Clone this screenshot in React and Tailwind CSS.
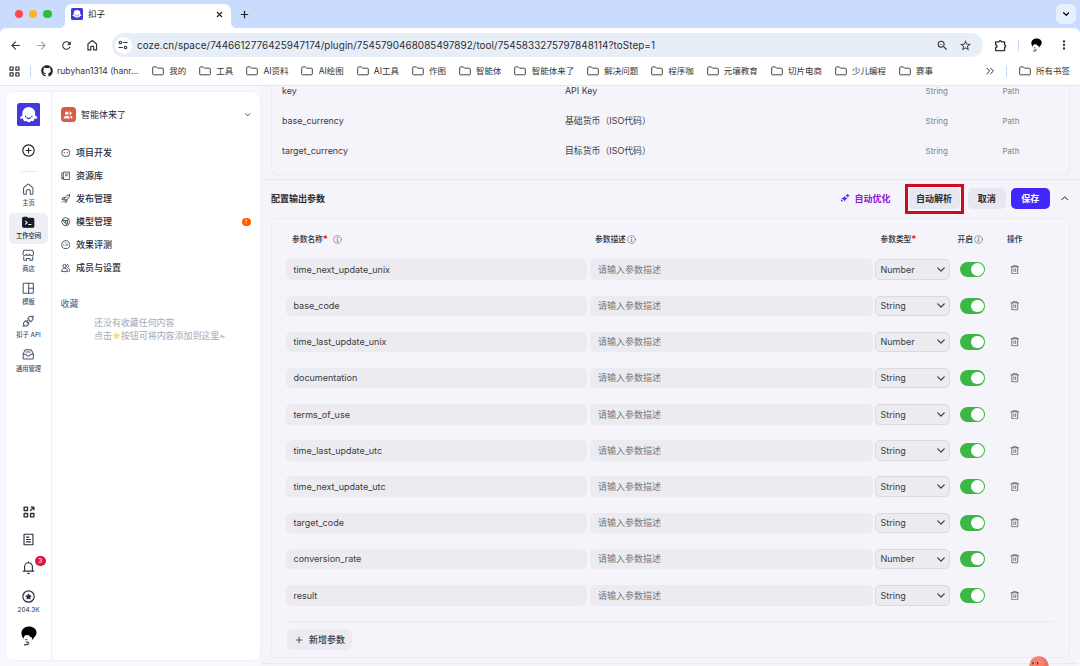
import { Plus, X } from "lucide-react";
import { FaGithub } from "react-icons/fa";
import { MdArrowBack, MdArrowForward, MdMoreVert, MdRefresh, MdStarBorder, MdZoomOut } from "react-icons/md";

const bookmarks = [
  "我的",
  "工具",
  "AI资料",
  "AI绘图",
  "AI工具",
  "作图",
  "智能体",
  "智能体来了",
  "解决问题",
  "程序咖",
  "元壤教育",
  "切片电商",
  "少儿编程",
  "赛事",
];

const inputParams = [
  { name: "key", desc: "API Key" },
  { name: "base_currency", desc: "基础货币（ISO代码）" },
  { name: "target_currency", desc: "目标货币（ISO代码）" },
];

const outputParams = [
  { name: "time_next_update_unix", type: "Number" },
  { name: "base_code", type: "String" },
  { name: "time_last_update_unix", type: "Number" },
  { name: "documentation", type: "String" },
  { name: "terms_of_use", type: "String" },
  { name: "time_last_update_utc", type: "String" },
  { name: "time_next_update_utc", type: "String" },
  { name: "target_code", type: "String" },
  { name: "conversion_rate", type: "Number" },
  { name: "result", type: "String" },
];

const Icon = ({ className = "size-3", width = 1.3, children }) => (
  <svg
    viewBox="0 0 16 16"
    fill="none"
    stroke="currentColor"
    strokeWidth={width}
    strokeLinecap="round"
    strokeLinejoin="round"
    className={`${className} shrink-0`}
  >
    {children}
  </svg>
);

const FolderIcon = () => (
  <svg viewBox="0 0 12 10" fill="none" stroke="#474747" strokeWidth="1" className="h-[10px] w-[12px] shrink-0">
    <path d="M.7 8V1.700c0-.5.3-.8.8-.8h2.800l1.300 1.300h4.900c.5 0 .8.3.8.8v5c0 .5-.3.8-.8.8h-9C1 8.800.7 8.500.7 8Z" />
  </svg>
);

const Chevron = ({ className, up, width = 1.4 }) => (
  <svg
    viewBox="0 0 10 6"
    fill="none"
    stroke="currentColor"
    strokeWidth={width}
    strokeLinecap="round"
    strokeLinejoin="round"
    className={`${className} shrink-0`}
  >
    <path d={up ? "M1 5l4-4 4 4" : "M1 1l4 4 4-4"} />
  </svg>
);

const InfoIcon = ({ className = "" }) => (
  <Icon className={`size-[9px] text-[#6b6d75] ${className}`} width={1.1}>
    <circle cx="8" cy="8" r="7" />
    <path d="M7 7.200h1.200V11M6.800 11.200h2.600" />
    <circle cx="8" cy="4.800" r=".5" fill="currentColor" />
  </Icon>
);

const TrashIcon = () => (
  <Icon className="size-[9.500px] text-[#55565c]" width={1.3}>
    <path d="M1.500 3h13M5 2.800V1.200h6v1.600M3 3.200v11.500h10V3.200M6.500 6.500v4.500M9.500 6.500v4.500" />
  </Icon>
);

const Ghost = ({ className }) => (
  <svg viewBox="0 0 24 24" className={`${className} shrink-0`}>
    <rect width="24" height="24" rx="3" fill="#4238df" />
    <path
      d="M12 4a6.500 6.500 0 0 0-6.500 6.500v2.200c-1.200.4-2.200 1.400-2.300 2.600 0 .8.7 1 1.500.7l1.200-.3c.3 1.200.7 2 1.400 2.600.8.600 1.600.2 2.200-.2.700 1 1.500 1.500 2.500 1.500s1.800-.5 2.500-1.500c.6.400 1.400.8 2.200.2.700-.6 1.100-1.400 1.400-2.600l1.200.3c.8.3 1.500.1 1.500-.7-.1-1.200-1.100-2.200-2.300-2.600v-2.200A6.500 6.500 0 0 0 12 4Z"
      fill="#fff"
    />
    <path
      d="M8.800 13.300v.8M15.200 13.300v.8M10.200 15c1 1.300 2.600 1.300 3.600 0"
      stroke="#4238df"
      strokeWidth="1.200"
      fill="none"
      strokeLinecap="round"
    />
  </svg>
);

const Avatar = ({ className }) => (
  <svg viewBox="0 0 16 20" className={`${className} shrink-0`}>
    <path d="M2 8.500 3 14l2 2.500-2 2.300 5-.3.500-2.500 3-3 1-3Z" fill="#fff" stroke="#aaa" strokeWidth=".4" />
    <path
      d="M.6 8.400C-.2 4.500 3 .7 7.500.6c4.500-.2 7.900 2.300 8 5.700.1 2.500-1.200 4.200-2.900 5.600l-.8 2-1.400-3-1 .3-1.200-2-3.500-.2-1.600 1.400-.5 2.200C1.600 11.500.8 10 .6 8.400Z"
      fill="#000"
    />
    <path d="m4.500 13.500 1.800.3M5 16l2 .2M3 18.900l3.800-.2.800-2.500" fill="none" stroke="#000" strokeWidth=".9" />
  </svg>
);

const navItems = [
  {
    label: "项目开发",
    icon: (
      <>
        <rect x="1.500" y="2.500" width="13" height="11.500" rx="4.500" />
        <path d="M5.500 7.500v1M10.500 7.500v1" />
      </>
    ),
  },
  {
    label: "资源库",
    icon: <path d="M1.500 3v10.500M4.500 1.800h10v12.400h-10zM7.500 5h4.500M7.500 8h3M4.500 11.500h-2" />,
  },
  {
    label: "发布管理",
    icon: (
      <path d="M14.500 1.500c-4 0-7 2.500-8.800 6.500l2.500 2.500c4-1.800 6.300-5 6.300-9ZM6.500 6H3.200L1.500 9l4 .2M10 9.500v3.300L7 14.500l-.2-4M2 14l3-3M10.300 5.700l.2-.2" />
    ),
  },
  {
    label: "模型管理",
    alert: true,
    icon: (
      <>
        <path d="M8 1.200 12.500 3 14.800 8 12.500 13 8 14.800 3.500 13 1.200 8 3.500 3Z" />
        <path d="M2.500 5.500 11 6v4.500L8.500 14M11 6l2-2.500M3 5.500l4 4.500 4 .5M7 10l1.500-4" />
      </>
    ),
  },
  {
    label: "效果评测",
    icon: (
      <>
        <path d="M4 13.800A7 7 0 1 1 12 13.800Z" />
        <path d="m8 9.500 2.500-3M4.500 8h.3M8 4.500v.2M11.500 8.500h.3" />
      </>
    ),
  },
  {
    label: "成员与设置",
    icon: (
      <>
        <circle cx="6" cy="5" r="2.800" />
        <path d="M1 13.800c0-3 2-4.800 5-4.800s5 1.800 5 4.800ZM10.500 2.500c3 0 3.500 4 .8 5M12.500 9c1.700.8 2.500 2.400 2.500 4.800h-1.500" />
      </>
    ),
  },
];

const railItems = [
  {
    label: "主页",
    icon: <path d="M2 6.800c0-.5.2-.8.6-1.100L7 1.800c.6-.5 1.400-.5 2 0l4.400 3.900c.4.300.6.600.6 1.100v6.700c0 .6-.3.900-.9.900h-2.500V11a2.600 2.600 0 0 0-5.200 0v3.400H2.900c-.6 0-.9-.3-.9-.9Z" />,
  },
  {
    label: "工作空间",
    active: true,
    icon: (
      <>
        <path
          d="M.8 3.200C.8 2 1.300 1.500 2.500 1.500H6L7.500 3h6c1 0 1.700.6 1.700 1.700v8c0 1-.7 1.700-1.700 1.700h-11c-1 0-1.700-.7-1.700-1.700Z"
          fill="currentColor"
        />
        <path d="m4.500 6.500 2.200 2-2.200 2M8.500 11h3" stroke="#fff" />
      </>
    ),
  },
  {
    label: "商店",
    icon: (
      <path d="M3.300 1.500h9.400c.8 0 1.300.5 1.400 1.300l.7 3.500c0 2.600-4.500 2.600-4.700 0-.3 2.600-3.900 2.600-4.200 0-.2 2.600-4.700 2.600-4.700 0l.7-3.500c.1-.8.600-1.300 1.400-1.300ZM2.200 10v3.700c0 .5.3.8.8.8h2.700v-2.300h4.600v2.300H13c.5 0 .8-.3.8-.8V10" />
    ),
  },
  {
    label: "模板",
    icon: (
      <>
        <rect x="1.500" y="1.500" width="13" height="13" rx="1" />
        <path d="M8.500 1.500v13M8.500 8h6" />
      </>
    ),
  },
  {
    label: "扣子 API",
    icon: (
      <>
        <path d="m7.300 4.500 1.800-1.800c1.300-1.300 3-1.200 4.100-.1s1.200 2.900 0 4.100l-1.800 1.900ZM4.600 7.300 2.800 9.200c-1.300 1.300-1.200 3-.1 4.100s2.900 1.200 4.100 0l1.900-1.800Z" />
        <path d="m13.200 2.700 1.600-1.500M2.800 13.200l-1.500 1.600M5.800 8.500l1.900-1.800M7.500 10.200l1.800-1.900" />
      </>
    ),
  },
  {
    label: "通用管理",
    icon: (
      <path d="M1.500 7.500 3.600 3.200c.3-.6.7-.9 1.400-.9h6c.7 0 1.100.3 1.400.9l2.100 4.300v5.700c0 .6-.4 1-1 1h-11c-.6 0-1-.4-1-1ZM1.500 8h3.800c.3 3.300 5.100 3.300 5.400 0h3.800M5.500 5h5" />
    ),
  },
];

const BrowserBar = () => (
  <div className="h-[86px] shrink-0 border-b border-[#e6e6e8] bg-[#c9dcfd]">
    <div className="flex h-[28px] items-end">
      <div className="flex h-full w-[65px] items-center gap-[5.500px] pl-[14.500px]">
        <span className="size-[8.700px] rounded-full bg-[#ff4b48]" />
        <span className="size-[8.700px] rounded-full bg-[#fdb02b]" />
        <span className="size-[8.700px] rounded-full bg-[#28c135]" />
      </div>
      <div className="relative flex h-[24px] w-[166px] items-center rounded-t-[7px] bg-white pb-[4px] pl-[6px]">
        <span className="absolute bottom-0 -left-[6px] size-[6px] bg-[radial-gradient(circle_at_0_0,transparent_6px,white_6.5px)]" />
        <span className="absolute -right-[6px] bottom-0 size-[6px] bg-[radial-gradient(circle_at_100%_0,transparent_6px,white_6.5px)]" />
        <Ghost className="size-[12px]" />
        <span className="ml-[5px] text-[8.500px] text-[#222]">扣子</span>
        <X className="mr-[7px] ml-auto size-[9px] text-[#222]" strokeWidth={3} />
      </div>
      <div className="flex h-[28px] flex-1 items-center pr-[4px] pl-[8px]">
        <Plus className="size-[11px] text-[#222]" strokeWidth={2.6} />
        <span className="ml-auto flex size-[20px] items-center justify-center rounded-[6px] bg-[#e5effe]">
          <Chevron className="h-[4px] w-[6.500px] text-[#111]" width={2} />
        </span>
      </div>
    </div>
    <div className="h-[57px] rounded-t-[6px] bg-white">
      <div className="flex h-[33px] items-center pt-px pl-[9px] text-[#333]">
        <MdArrowBack className="size-[13px] shrink-0" />
        <MdArrowForward className="ml-[12.500px] size-[13px] shrink-0 text-[#a2a2a2]" />
        <MdRefresh className="ml-[12.500px] size-[13px] shrink-0" />
        <Icon className="ml-[13px] size-[12.500px]" width={1.5}>
          <path d="M2.500 6.500 8 2l5.500 4.500V14h-3.700V9.500H6.200V14H2.500Z" />
        </Icon>
        <div className="ml-[13px] flex h-[24px] w-[871px] items-center rounded-full bg-[#e8eef8] pl-[3px]">
          <span className="flex size-[17px] items-center justify-center rounded-full bg-white">
            <Icon className="size-[10px]" width={1.8}>
              <circle cx="4" cy="4" r="2" />
              <path d="M9 4h5.500M1.500 12H7" />
              <circle cx="12" cy="12" r="2" />
            </Icon>
          </span>
          <span className="ml-[5.500px] text-[9.900px] tracking-[0.065px] whitespace-nowrap text-[#2b2d31]">
            coze.cn/space/7446612776425947174/plugin/7545790468085497892/tool/7545833275797848114?toStep=1
          </span>
          <MdZoomOut className="ml-auto size-[13px] shrink-0" />
          <MdStarBorder className="mr-[11px] ml-[10px] size-[13px] shrink-0" />
        </div>
        <Icon className="ml-[11px] size-[13px]" width={1.7}>
          <path d="M2 3.500h4.200a1.400 1.400 0 0 1 2.800 0h4v4a1.400 1.400 0 0 1 0 2.800v4H2v-3.700a1.700 1.700 0 0 0 0-3.400Z" />
        </Icon>
        <span className="ml-[11.500px] h-[11px] w-px bg-[#c3d7fb]" />
        <Avatar className="ml-[11.500px] h-[14px] w-[11px]" />
        <MdMoreVert className="ml-[15px] size-[14px] shrink-0 text-[#333]" />
      </div>
      <div className="flex h-[20px] items-center pl-[9px] text-[8.500px] whitespace-nowrap text-[#333]">
        <Icon className="size-[11px]" width={1.7}>
          <path d="M1.500 1.500h4.500V6H1.500ZM10 1.500h4.500V6H10ZM1.500 10h4.500v4.500H1.500ZM10 10h4.500v4.500H10Z" />
        </Icon>
        <span className="ml-[10px] h-[11px] w-px bg-[#c3d7fb]" />
        <FaGithub className="ml-[10px] size-[12px] text-[#222]" />
        <span className="ml-[4px] w-[95px] tracking-[0.050px]">rubyhan1314 (hanr...</span>
        <div className="flex gap-[12.750px]">
          {bookmarks.map((name) => (
            <span key={name} className="flex items-center gap-[5.300px]">
              <FolderIcon />
              {name}
            </span>
          ))}
        </div>
        <Icon className="ml-auto size-[10px]" width={1.6}>
          <path d="m3 3.500 4.500 4.500L3 12.500M9 3.500 13.500 8 9 12.500" />
        </Icon>
        <span className="ml-[11px] h-[11px] w-px bg-[#c3d7fb]" />
        <span className="mr-[10px] ml-[12px] flex items-center gap-[5.300px]">
          <FolderIcon />
          所有书签
        </span>
      </div>
    </div>
  </div>
);

const Rail = () => (
  <div className="flex w-[46px] flex-col items-center border-r border-[#ededf2] pt-[10.500px] text-[#4a5068]">
    <Ghost className="size-[23.500px]" />
    <Icon className="mt-[17.500px] size-[13px] text-[#20242f]" width={1.4}>
      <circle cx="8" cy="8" r="7" />
      <path d="M8 5v6M5 8h6" />
    </Icon>
    <span className="mt-[14px] h-px w-[16px] bg-[#e5e6ec]" />
    <div className="mt-[8px] flex flex-col gap-[2.200px]">
      {railItems.map((item) => (
        <div
          key={item.label}
          className={`flex h-[31px] w-[39px] flex-col items-center rounded-[5px] pt-[3px] ${
            item.active ? "bg-[#eeeff5] text-[#151a2b]" : ""
          }`}
        >
          <Icon className="size-[12.500px]">{item.icon}</Icon>
          <span className="mt-[3.700px] text-[6.300px] leading-[9px] font-medium whitespace-nowrap">{item.label}</span>
        </div>
      ))}
    </div>
    <div className="mt-auto flex flex-col items-center pb-[14px] text-[#2a3042]">
      <Icon className="size-[12px]" width={1.8}>
        <path d="M1.500 1.500H6V6H1.500ZM1.500 10H6v4.500H1.500ZM10 10h4.500v4.500H10ZM10 6l4.500-4.500M11 1.500h3.500V5" />
      </Icon>
      <Icon className="mt-[15.500px] size-[13px]" width={1.4}>
        <path d="M2.500 1.500h11v13h-11ZM5.500 5h3M5.500 8h5M5.500 11h5" />
      </Icon>
      <div className="relative mt-[15px]">
        <Icon className="size-[13px]" width={1.4}>
          <path d="M1.500 12.500h13M3.200 12.500V7a4.800 4.800 0 0 1 9.600 0v5.500M8 2V1M7 15.200h2" />
        </Icon>
        <span className="absolute -top-[5.500px] left-[13px] flex size-[10.500px] items-center justify-center rounded-full bg-[#e0183d] text-[6.500px] leading-none text-white">
          3
        </span>
      </div>
      <Icon className="mt-[16px] size-[13px]" width={1.5}>
        <circle cx="8" cy="8" r="7" />
        <path d="m8 5.300.9 1.800 2 .3-1.500 1.400.4 2L8 9.900l-1.800.9.400-2-1.500-1.400 2-.3Z" fill="currentColor" />
      </Icon>
      <span className="mt-[3px] text-[6.500px] leading-[9px]">204.3K</span>
      <Avatar className="mt-[10.500px] h-[20px] w-[16px]" />
    </div>
  </div>
);

const Sidebar = () => (
  <div className="mt-[5px] ml-[5px] flex h-[569.500px] w-[256px] shrink-0 overflow-hidden rounded-[8px] border border-[#f0f0f6] bg-white">
    <Rail />
    <div className="flex flex-1 flex-col pt-[14.500px] pr-[9.500px] pl-[8.500px]">
      <div className="flex h-[16px] items-center">
        <span className="flex size-[15px] items-center justify-center rounded-[3.500px] bg-[#d95b4a] text-white">
          <svg viewBox="0 0 16 16" fill="currentColor" className="size-[10px]">
            <circle cx="6" cy="5" r="2.700" />
            <path d="M1 13.500c0-3 2-4.500 5-4.500s5 1.500 5 4.500ZM10 2.800a2.500 2.500 0 1 1 0 4.500c1-1.300 1-3.200 0-4.500ZM11.500 8.800c2.300.3 3.700 1.800 3.700 4.700h-2.700c.1-2-.1-3.300-1-4.700Z" />
          </svg>
        </span>
        <span className="ml-[5.500px] text-[9px] text-[#262b3a]">智能体来了</span>
        <Chevron className="ml-auto h-[3.500px] w-[5.500px] text-[#3b4052]" width={1.7} />
      </div>
      <div className="mt-[19px] flex flex-col">
        {navItems.map((item) => (
          <div key={item.label} className="flex h-[23px] items-center text-[9px] font-medium text-[#262b3a]">
            <Icon className="mr-[6px] size-[9.500px]">{item.icon}</Icon>
            {item.label}
            {item.alert && (
              <span className="ml-auto flex size-[8.500px] items-center justify-center rounded-full bg-[#ff5c00] text-[6px] leading-none text-white">
                !
              </span>
            )}
          </div>
        ))}
      </div>
      <div className="mt-[17.500px] text-[9px] leading-[14px] text-[#555a6e]">收藏</div>
      <div className="mt-[5px] ml-[33.500px] text-[8.950px] leading-[13px] whitespace-nowrap text-[#a3a7bb]">
        <div>还没有收藏任何内容</div>
        <div className="flex items-center">
          点击
          <svg viewBox="0 0 16 16" fill="#fbdc7c" className="size-[9px]">
            <path d="m8 1 2.100 4.700 5.100.5-3.800 3.400 1.100 5L8 12l-4.500 2.600 1.100-5L.8 6.200l5.100-.5Z" />
          </svg>
          按钮可将内容添加到这里~
        </div>
      </div>
    </div>
  </div>
);

const OutputTable = () => (
  <div className="mx-[10px] h-[440px] rounded-[6px] border border-[#ebebf0]">
    <div className="flex h-[32.500px] items-center pt-[8.500px] pl-[20px] text-[7.700px] font-medium text-[#2e2f36]">
      <div className="flex w-[303px] items-center">
        参数名称<span className="text-[10px] leading-none text-[#f00]">*</span>
        <InfoIcon className="ml-[5px]" />
      </div>
      <div className="flex w-[285.500px] items-center">
        参数描述
        <InfoIcon className="ml-[1.500px]" />
      </div>
      <div className="flex w-[77px] items-center">
        参数类型<span className="text-[10px] leading-none text-[#f00]">*</span>
      </div>
      <div className="flex w-[49.500px] items-center">
        开启
        <InfoIcon className="ml-[1.500px]" />
      </div>
      <div>操作</div>
    </div>
    <div className="flex flex-col">
      {outputParams.map((param) => (
        <div key={param.name} className="flex h-[36.200px] items-center pl-[14px] text-[9px] text-[#3a3b42]">
          <div className="flex h-[20.500px] w-[301px] items-center rounded-[5px] bg-[#ecebf0] pl-[7.500px]">
            {param.name}
          </div>
          <div className="ml-[3px] flex h-[20.500px] w-[283px] items-center rounded-[5px] bg-[#ecebf0] pl-[8px] text-[#77777e]">
            请输入参数描述
          </div>
          <div className="ml-[2px] flex h-[20.500px] w-[75px] items-center justify-between rounded-[5px] border border-[#d9d9df] bg-[#ecebf0] pr-[4px] pl-[4.500px]">
            {param.type}
            <Chevron className="h-[5px] w-[8px]" width={1.6} />
          </div>
          <div className="ml-[9.500px] flex h-[15.500px] w-[25.500px] items-center justify-end rounded-full bg-[#3cb745] pr-[1.500px]">
            <span className="size-[12.500px] rounded-full bg-white" />
          </div>
          <div className="ml-[24.700px]">
            <TrashIcon />
          </div>
        </div>
      ))}
    </div>
    <div className="mt-[7.500px] mr-[15px] ml-[15px] h-px bg-[#e9e9ee]" />
    <button className="mt-[7.500px] ml-[15px] flex h-[20.500px] w-[65px] items-center rounded-[5px] bg-[#ecebf0] pl-[7px] text-[9px] font-medium text-[#3a3b42]">
      <Plus className="mr-[5px] size-[10px]" strokeWidth={2} />
      新增参数
    </button>
  </div>
);

const App = () => {
  return (
    <div className="flex h-[666px] w-[1080px] flex-col overflow-hidden bg-[#f8f8fe] [font-family:Inter,'Noto_Sans_CJK_SC',sans-serif]">
      <BrowserBar />
      <div className="flex h-[580px]">
        <Sidebar />
        <main className="relative h-[580px] w-[819px] overflow-hidden rounded-br-[8px] bg-[#f4f4fa]">
          <div className="mx-[10px] flex h-[89px] flex-col justify-end rounded-b-[6px] border border-t-0 border-[#ebebf0] pb-[8px] pl-[10px] text-[8.900px] text-[#3a3b42]">
            {inputParams.map((param) => (
              <div key={param.name} className="flex h-[30px] shrink-0 items-center">
                <span className="w-[283px]">{param.name}</span>
                <span className="w-[360.500px]">{param.desc}</span>
                <span className="w-[77px] text-[8px] text-[#82828a]">String</span>
                <span className="text-[8px] text-[#82828a]">Path</span>
              </div>
            ))}
          </div>
          <div className="mt-[4px] flex h-[39px] items-center border-t border-[#e9e9ef] pr-[11.500px] pb-px pl-[10px] text-[9px] font-semibold text-[#2a2b33]">
            配置输出参数
            <div className="ml-auto flex items-center gap-[4.500px] text-[#9014e0]">
              <svg viewBox="0 0 16 16" fill="#4c2df5" className="size-[8.500px]">
                <path d="M7 3c.6 3.300 1.700 4.500 5.500 5.500C9 9.500 7.700 11 7 15c-.9-4-2.500-5.500-6.800-6.500C4.500 7.500 6.300 6.300 7 3ZM11.500 0h2v2h2v2h-2v2h-2V4h-2V2h2ZM0 11h3v3H0Z" />
              </svg>
              自动优化
            </div>
            <div className="ml-[14px] flex h-[30px] w-[59px] items-center justify-center border-[3px] border-[#d20a1e] bg-[#f4f4fa]">
              <span className="flex h-[21px] w-[51px] shrink-0 items-center justify-center rounded-[5px] bg-[#e6e7f0]">
                自动解析
              </span>
            </div>
            <button className="ml-[4px] h-[20.500px] w-[38.500px] rounded-[5px] bg-[#e6e7f0]">取消</button>
            <button className="ml-[5px] h-[20.500px] w-[38.500px] rounded-[5px] bg-[#4326fb] text-white">保存</button>
            <Chevron up className="ml-[11.500px] h-[4.500px] w-[7.500px] text-[#44454d]" />
          </div>
          <OutputTable />
          <div className="mt-[5px] h-px bg-[#e9e9ef]" />
          <svg viewBox="0 0 20 20" className="absolute top-[569.500px] left-[768px] size-[20px]">
            <circle cx="10" cy="10" r="9.700" fill="#f1705f" />
            <circle cx="8" cy="7.500" r="7" fill="#fa9078" opacity=".6" />
            <path d="M4 6.500v1.300M8.500 6.500v1.300" stroke="#3c2020" strokeWidth="1.200" strokeLinecap="round" />
          </svg>
        </main>
      </div>
    </div>
  );
};

export default App;
